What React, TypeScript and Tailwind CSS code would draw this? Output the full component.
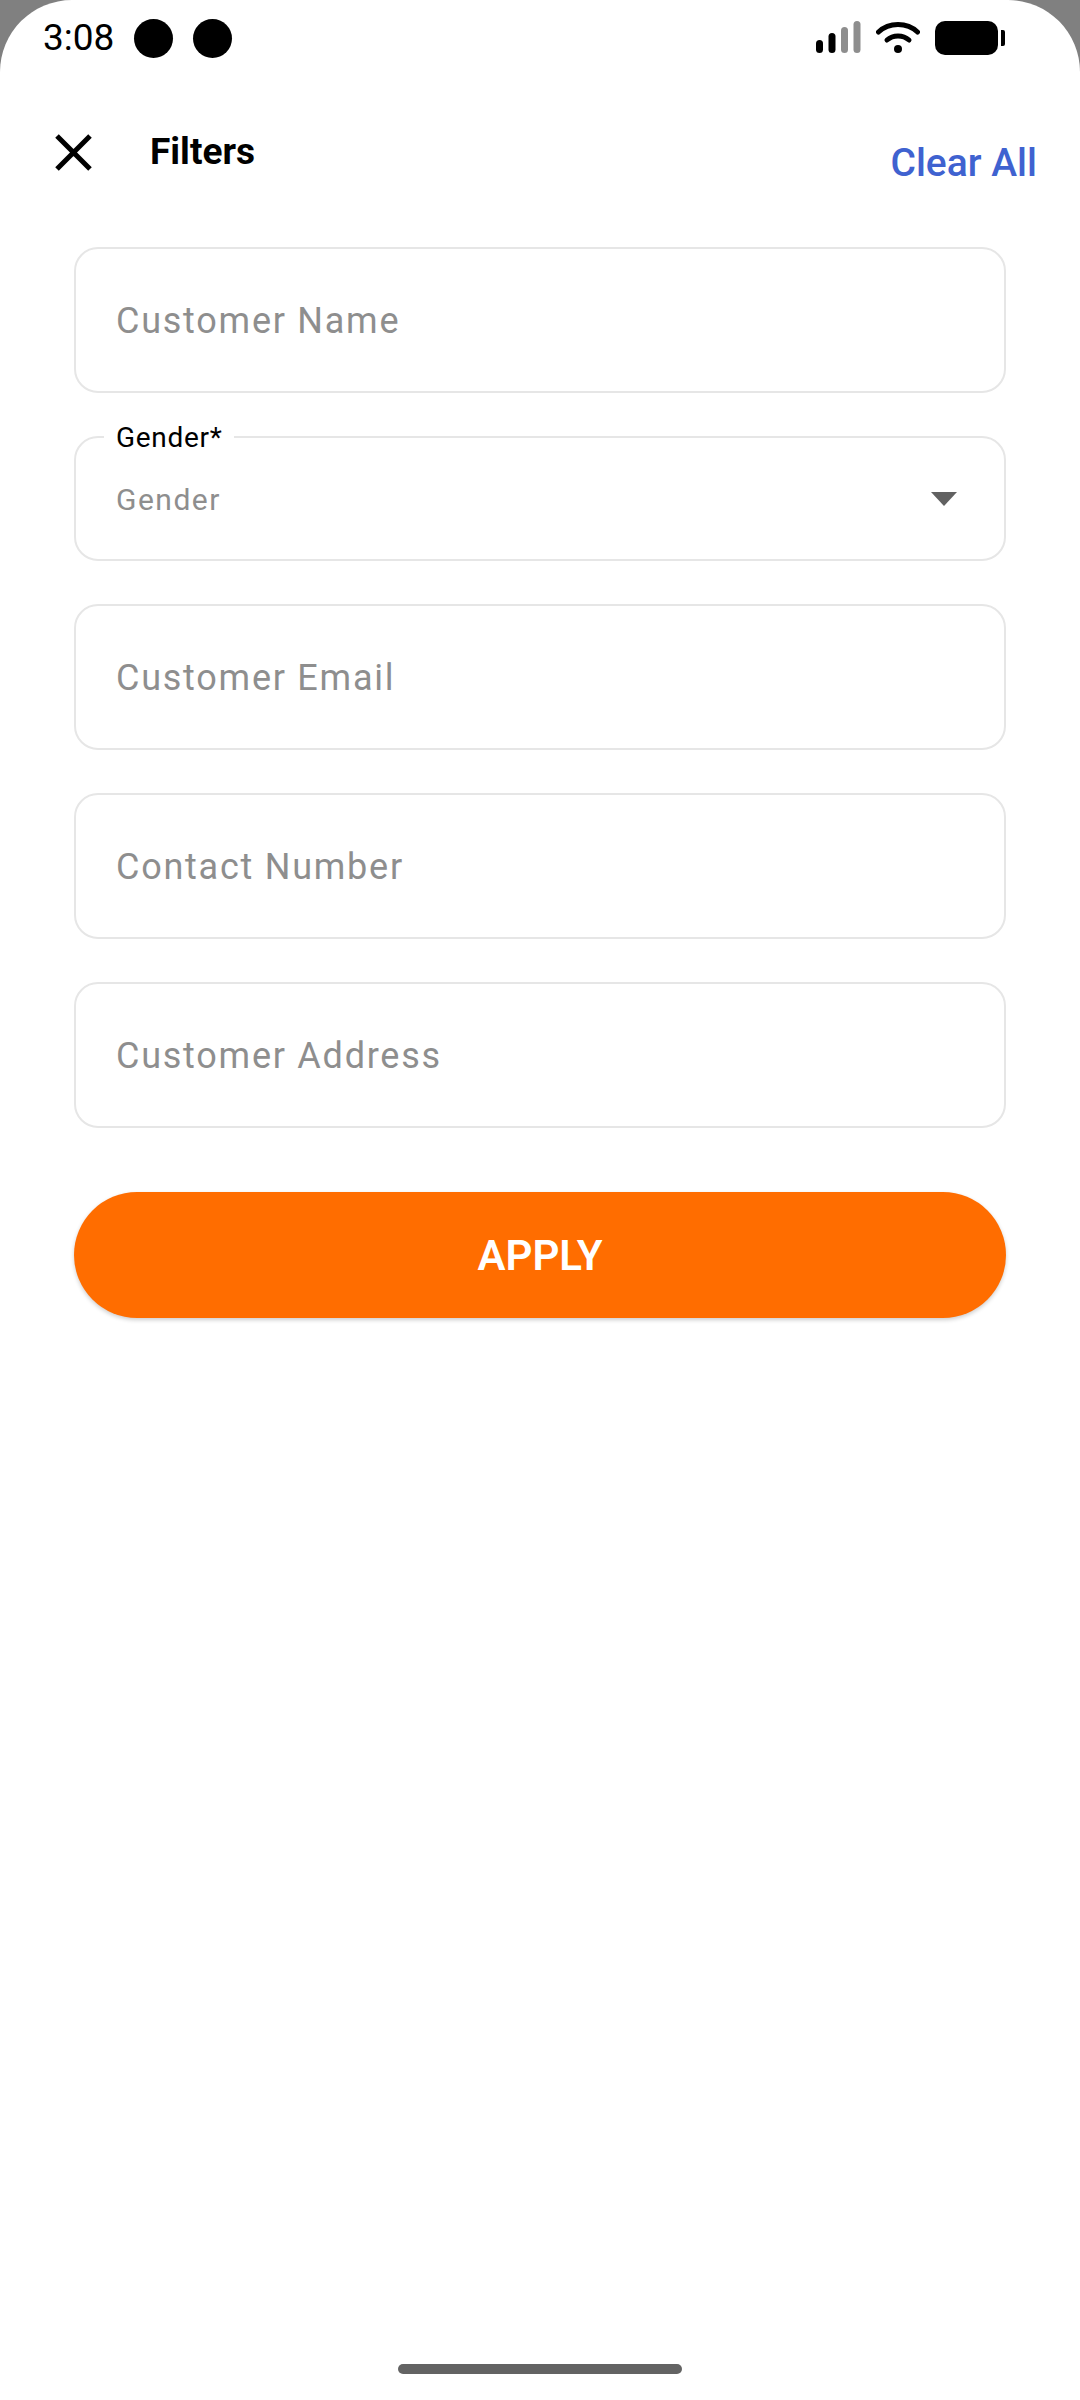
import type { ReactNode } from 'react';

function StatusBar() {
  return (
    <div className="flex h-[76px] items-center justify-between pl-[43px] pr-[75px]">
      <div className="flex items-center">
        <span className="text-[37px] leading-[38px] text-black">3:08</span>
        <span className="ml-[20px] h-[39px] w-[39px] rounded-full bg-black" />
        <span className="ml-[20px] h-[39px] w-[39px] rounded-full bg-black" />
      </div>
      <div className="flex items-center">
        <svg width="46" height="34" viewBox="0 0 46 34">
          <rect x="1" y="19" width="7" height="13" rx="3.5" fill="#000" />
          <rect x="13.5" y="12" width="7" height="20" rx="3.5" fill="#000" />
          <rect x="26" y="6" width="7" height="26" rx="3.5" fill="#8e8e8e" />
          <rect x="38.5" y="0" width="7" height="32" rx="3.5" fill="#8e8e8e" />
        </svg>
        <svg className="ml-[15px]" width="44" height="34" viewBox="0 0 44 34" fill="none" stroke="#000" strokeLinecap="round">
          <path d="M2.5 11 C13 1, 31 1, 41.5 11" strokeWidth="5" />
          <path d="M11 19 C17 13.5, 27 13.5, 33 19" strokeWidth="5" />
          <circle cx="22" cy="28" r="4" fill="#000" stroke="none" />
        </svg>
        <span className="ml-[15px] h-[34px] w-[63px] rounded-[10px] bg-black" />
        <span className="ml-[3px] h-[16px] w-[4px] rounded-r-[2px] bg-black" />
      </div>
    </div>
  );
}

function Field({ label }: { label: string }) {
  return (
    <div className="flex h-[146px] items-center rounded-[24px] border-2 border-[#e6e6e6] pl-[40px]">
      <span className="mt-[1px] text-[36px] leading-[40px] tracking-[1.75px] text-[#8e8e8e]">{label}</span>
    </div>
  );
}

function GenderSelect() {
  return (
    <div className="relative flex h-[125px] items-center justify-between rounded-[24px] border-2 border-[#e6e6e6] pl-[40px] pr-[47px]">
      <span className="absolute left-[28px] top-[-14px] bg-white px-[12px] text-[28px] leading-[28px] tracking-[0.7px] text-black">
        Gender*
      </span>
      <span className="mt-[3px] text-[30px] leading-[34px] tracking-[1.5px] text-[#8e8e8e]">Gender</span>
      <svg width="26" height="14" viewBox="0 0 26 14">
        <path d="M0 0 H26 L13 14 Z" fill="#616161" />
      </svg>
    </div>
  );
}

function Screen({ children }: { children: ReactNode }) {
  return (
    <div className="h-[2400px] w-[1080px] bg-[#808080] font-['Roboto',sans-serif]">
      <div className="flex h-full flex-col rounded-t-[72px] bg-white">{children}</div>
    </div>
  );
}

export default function App() {
  return (
    <Screen>
      <StatusBar />
      {/* Header */}
      <div className="flex h-[171px] items-start justify-between pl-[55px] pr-[43px]">
        <div className="mt-[56px] flex items-center">
          <svg width="37" height="37" viewBox="0 0 37 37" fill="none" stroke="#000" strokeWidth="5">
            <path d="M2 2 L35 35 M35 2 L2 35" />
          </svg>
          <span className="ml-[58px] text-[37px] font-bold leading-[40px] text-black">Filters</span>
        </div>
        <span className="mt-[65px] text-[39px] font-medium leading-[44px] text-[#3f62d0]">Clear All</span>
      </div>
      {/* Form */}
      <div className="ml-[74px] flex w-[932px] flex-col">
        <Field label="Customer Name" />
        <div className="mt-[43px]">
          <GenderSelect />
        </div>
        <div className="mt-[43px] flex flex-col gap-[43px]">
          <Field label="Customer Email" />
          <Field label="Contact Number" />
          <Field label="Customer Address" />
        </div>
        <button className="mt-[64px] flex h-[126px] items-center justify-center rounded-full bg-[#ff6d00] text-[42px] font-semibold text-white shadow-[0_2px_4px_rgba(0,0,0,0.2)]">
          APPLY
        </button>
      </div>
      <div className="mb-[26px] mt-auto flex justify-center">
        <span className="h-[10px] w-[284px] rounded-full bg-[#636363]" />
      </div>
    </Screen>
  );
}
